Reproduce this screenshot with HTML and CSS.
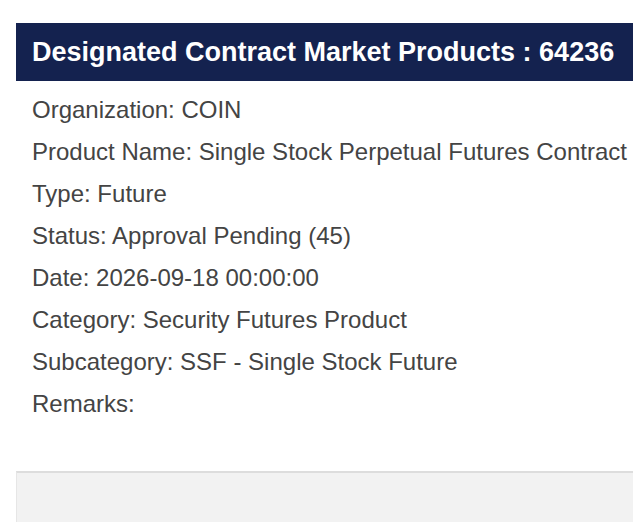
FILE: index.html
```html
<!DOCTYPE html>
<html lang="en">
<head>
    <meta charset="UTF-8">
    <meta name="viewport" content="width=device-width, initial-scale=1.0">
    <title>Designated Contract Market Products</title>
    <link rel="stylesheet" href="styles.css">
</head>
<body>
    <div class="product-card">
        <h2 class="product-title">Designated Contract Market Products : 64236</h2>
        <div class="product-details">
            <div class="detail-row">Organization: COIN</div>
            <div class="detail-row">Product Name: Single Stock Perpetual Futures Contract</div>
            <div class="detail-row">Type: Future</div>
            <div class="detail-row">Status: Approval Pending (45)</div>
            <div class="detail-row">Date: 2026-09-18 00:00:00</div>
            <div class="detail-row">Category: Security Futures Product</div>
            <div class="detail-row">Subcategory: SSF - Single Stock Future</div>
            <div class="detail-row">Remarks:</div>
        </div>
    </div>

    <div class="footer-panel"></div>
</body>
</html>
```

FILE: styles.css
```css
:root {
    --navy: #14224f;
    --text: #444444;
    --panel-bg: #f2f2f2;
    --panel-border: #dddddd;
}

html, body {
    overflow: hidden;
}

body {
    background: #ffffff;
    color: var(--text);
    font-family: "Liberation Sans", Arial, sans-serif;
    margin: 0;
    padding: 23px 0 0 16px;
    width: 640px;
}

.product-title {
    background: var(--navy);
    color: #ffffff;
    font-size: 27px;
    font-weight: bold;
    line-height: 58px;
    height: 58px;
    margin: 0;
    padding: 0 16px;
    white-space: nowrap;
}

.product-details {
    padding: 8px 16px 46px;
}

.detail-row {
    font-size: 24px;
    line-height: 42px;
    white-space: nowrap;
}

.footer-panel {
    background: var(--panel-bg);
    border-top: 2px solid var(--panel-border);
    border-left: 1px solid #e6e6e6;
    height: 60px;
}
```
